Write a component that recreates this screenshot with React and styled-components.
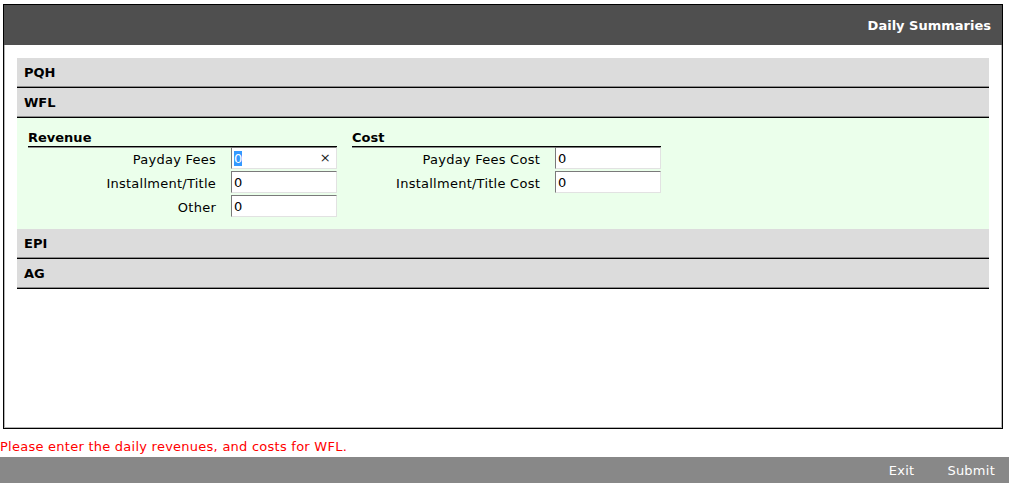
import React, { useEffect, useRef } from "react";
import styled, { createGlobalStyle } from "styled-components";

const GlobalStyle = createGlobalStyle`
  body {
    margin: 0;
    font-family: "DejaVu Sans", Verdana, sans-serif;
    font-size: 13px;
    letter-spacing: 0.25px;
    color: #000;
    background: #fff;
  }
`;

const Panel = styled.div`
  box-sizing: border-box;
  width: 1000px;
  height: 425px;
  margin: 4px 0 0 3px;
  border: 1px solid #000;
  box-shadow: inset 0 0 0 1px #b4b4b4;
`;

const Header = styled.div`
  height: 40px;
  background: #4f4f4f;
  color: #fff;
  font-weight: bold;
  letter-spacing: 0;
  display: flex;
  align-items: center;
  justify-content: flex-end;
  padding-right: 11px;
`;

const Accordion = styled.div`
  margin: 13px 13px 0 13px;
`;

const SectionHeader = styled.div`
  box-sizing: border-box;
  height: 30px;
  padding-left: 7px;
  display: flex;
  align-items: center;
  background: #dcdcdc;
  font-weight: bold;
  letter-spacing: 0;
  border-bottom: 1px solid #000;
  box-shadow: inset 0 -1px 0 #8c8c8c;
`;

const SectionBody = styled.div`
  display: flex;
  gap: 15px;
  padding: 12px 11px 9px;
  background: #ebffeb;
`;

const Column = styled.div`
  width: 309px;
`;

const ColumnTitle = styled.div`
  font-weight: bold;
  letter-spacing: 0;
  line-height: 16px;
  border-bottom: 1px solid #000;
  box-shadow: 0 1px 0 #8c8c8c;
  margin-bottom: 1px;
`;

const FieldRow = styled.label`
  display: grid;
  grid-template-columns: 1fr 106px;
  column-gap: 15px;
  align-items: center;
  height: 24px;
  margin-top: -2px;
  margin-bottom: 2px;
`;

const FieldLabel = styled.span`
  text-align: right;
  padding-top: 2px;
`;

const InputWrap = styled.span`
  position: relative;
  display: block;
`;

const Input = styled.input`
  box-sizing: border-box;
  width: 106px;
  height: 22px;
  padding: 0 16px 0 2px;
  border: 1px solid;
  border-color: #7a7a7a #e2e2e2 #e2e2e2 #7a7a7a;
  background: #fff;
  font-family: inherit;
  font-size: 13px;
  outline: none;

  &::selection {
    background: #3399ff;
    color: #fff;
  }
`;

const ClearMark = styled.span`
  position: absolute;
  right: 6px;
  top: 4px;
  font-size: 13px;
  line-height: 14px;
  color: #222;
`;

const Message = styled.div`
  padding: 10px 0 2px;
  line-height: 16px;
  color: #ff0000;
`;

const Footer = styled.div`
  width: 1009px;
  height: 26px;
  background: #888;
  display: flex;
  align-items: center;
  justify-content: flex-end;
  gap: 33px;
  padding-right: 14px;
  box-sizing: border-box;
  color: #fff;
`;

const FooterButton = styled.span`
  cursor: pointer;
`;

const revenue = ["Payday Fees", "Installment/Title", "Other"];
const cost = ["Payday Fees Cost", "Installment/Title Cost"];

const Field = ({ label, focused }) => {
  const ref = useRef(null);
  useEffect(() => {
    if (focused && ref.current) {
      ref.current.focus();
      ref.current.select();
    }
  }, [focused]);
  return (
    <FieldRow>
      <FieldLabel>{label}</FieldLabel>
      <InputWrap>
        <Input ref={ref} type="text" defaultValue="0" />
        {focused && <ClearMark>×</ClearMark>}
      </InputWrap>
    </FieldRow>
  );
};

export default function App() {
  return (
    <>
      <GlobalStyle />
      <Panel>
        <Header>Daily Summaries</Header>
        <Accordion>
          <SectionHeader>PQH</SectionHeader>
          <SectionHeader>WFL</SectionHeader>
          <SectionBody>
            <Column>
              <ColumnTitle>Revenue</ColumnTitle>
              {revenue.map((l, i) => (
                <Field key={l} label={l} focused={i === 0} />
              ))}
            </Column>
            <Column>
              <ColumnTitle>Cost</ColumnTitle>
              {cost.map((l) => (
                <Field key={l} label={l} />
              ))}
            </Column>
          </SectionBody>
          <SectionHeader>EPI</SectionHeader>
          <SectionHeader>AG</SectionHeader>
        </Accordion>
      </Panel>
      <Message>Please enter the daily revenues, and costs for WFL.</Message>
      <Footer>
        <FooterButton>Exit</FooterButton>
        <FooterButton>Submit</FooterButton>
      </Footer>
    </>
  );
}
